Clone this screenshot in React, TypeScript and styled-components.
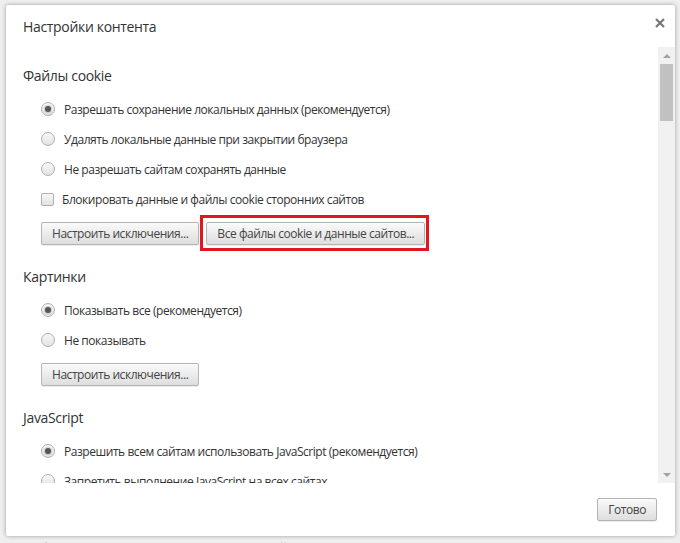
import { createGlobalStyle } from 'styled-components';
import styled from 'styled-components';

const GlobalStyle = createGlobalStyle`
  html, body {
    margin: 0;
    padding: 0;
    height: 543px;
    overflow: hidden;
    background: #efefef;
  }
  body {
    font-family: 'Open Sans', 'Noto Sans', sans-serif;
    color: #333;
  }
`;

type TOption = {
  label: string;
  checked?: boolean;
};

const cookieOptions: TOption[] = [
  { label: 'Разрешать сохранение локальных данных (рекомендуется)', checked: true },
  { label: 'Удалять локальные данные при закрытии браузера' },
  { label: 'Не разрешать сайтам сохранять данные' }
];

const imageOptions: TOption[] = [
  { label: 'Показывать все (рекомендуется)', checked: true },
  { label: 'Не показывать' }
];

const jsOptions: TOption[] = [
  { label: 'Разрешить всем сайтам использовать JavaScript (рекомендуется)', checked: true },
  { label: 'Запретить выполнение JavaScript на всех сайтах' }
];

const RadioList = ({ options }: { options: TOption[] }) => (
  <>
    {options.map((o) => (
      <OptionRow key={o.label}>
        <Radio $checked={!!o.checked} />
        <OptionLabel>{o.label}</OptionLabel>
      </OptionRow>
    ))}
  </>
);

export default function App() {
  return (
    <Backdrop>
      <GlobalStyle />
      <Dialog>
        <Header>
          <Title>Настройки контента</Title>
          <CloseButton aria-label="Закрыть">
            <svg width="10" height="10" viewBox="0 0 10 10">
              <path d="M1 1 L9 9 M9 1 L1 9" stroke="#767676" strokeWidth="2.2" />
            </svg>
          </CloseButton>
        </Header>

        <Body>
          <Content>
            <Section>
              <SectionTitle>Файлы cookie</SectionTitle>
              <RadioList options={cookieOptions} />
              <OptionRow>
                <Checkbox />
                <OptionLabel>Блокировать данные и файлы cookie сторонних сайтов</OptionLabel>
              </OptionRow>
              <ButtonRow>
                <Button>Настроить исключения...</Button>
                <Button $highlight>Все файлы cookie и данные сайтов...</Button>
              </ButtonRow>
            </Section>

            <Section>
              <SectionTitle>Картинки</SectionTitle>
              <RadioList options={imageOptions} />
              <ButtonRow>
                <Button>Настроить исключения...</Button>
              </ButtonRow>
            </Section>

            <Section>
              <SectionTitle>JavaScript</SectionTitle>
              <RadioList options={jsOptions} />
            </Section>
          </Content>

          <Scrollbar>
            <ScrollArrow>
              <ArrowUp />
            </ScrollArrow>
            <ScrollThumb />
            <ScrollSpacer />
            <ScrollArrow>
              <ArrowDown />
            </ScrollArrow>
          </Scrollbar>
        </Body>

        <Footer>
          <Button>Готово</Button>
        </Footer>
      </Dialog>
      <PageBehind>Chrome использует системные настройки прокси-сервера</PageBehind>
    </Backdrop>
  );
}

const Backdrop = styled.div`
  padding: 5px 0 0 6px;
`;

const Dialog = styled.div`
  width: 669px;
  height: 531px;
  background: #fff;
  border-radius: 2px;
  box-shadow: 0 0 4px rgba(0, 0, 0, 0.35);
  display: flex;
  flex-direction: column;
  overflow: hidden;
`;

const Header = styled.div`
  height: 42px;
  flex: 0 0 42px;
  box-sizing: border-box;
  padding: 11px 5px 0 17px;
  display: flex;
  justify-content: space-between;
  align-items: flex-start;
`;

const Title = styled.h1`
  margin: 0;
  font-size: 14px;
  line-height: 22px;
  font-weight: 400;
  letter-spacing: -0.33px;
  color: #333;
`;

const CloseButton = styled.button`
  width: 20px;
  height: 20px;
  margin-top: -3px;
  padding: 0;
  border: 0;
  background: transparent;
  display: flex;
  align-items: center;
  justify-content: center;
`;

const Body = styled.div`
  flex: 1;
  display: flex;
  min-height: 0;
`;

const Content = styled.div`
  flex: 1;
  overflow: hidden;
  padding: 18px 0 0 17px;
  display: flex;
  flex-direction: column;
  gap: 21px;
`;

const Section = styled.section`
  display: flex;
  flex-direction: column;
`;

const SectionTitle = styled.h2`
  margin: 0 0 7px;
  font-size: 14px;
  line-height: 22px;
  font-weight: 400;
  letter-spacing: -0.33px;
  color: #333;
`;

const OptionRow = styled.div`
  height: 30px;
  padding-left: 18px;
  display: flex;
  align-items: center;
`;

const Radio = styled.span<{ $checked: boolean }>`
  width: 14px;
  height: 14px;
  flex: 0 0 14px;
  box-sizing: border-box;
  border-radius: 50%;
  border: 1px solid #b0b0b0;
  background: linear-gradient(#f8f8f8, #e2e2e2);
  display: flex;
  align-items: center;
  justify-content: center;
  margin-right: 9px;

  &::after {
    content: '';
    display: ${({ $checked }) => ($checked ? 'block' : 'none')};
    width: 6px;
    height: 6px;
    border-radius: 50%;
    background: #555;
    box-shadow: 0 0 1px 1px rgba(0, 0, 0, 0.15);
  }
`;

const Checkbox = styled.span`
  width: 13px;
  height: 13px;
  flex: 0 0 13px;
  box-sizing: border-box;
  border: 1px solid #b0b0b0;
  border-radius: 2px;
  background: linear-gradient(#f8f8f8, #e2e2e2);
  margin-right: 8px;
`;

const OptionLabel = styled.span`
  font-size: 12px;
  letter-spacing: -0.45px;
  color: #333;
  white-space: nowrap;
`;

const ButtonRow = styled.div`
  margin-top: 8px;
  padding-left: 18px;
  display: flex;
  gap: 7px;
`;

const Button = styled.button<{ $highlight?: boolean }>`
  position: relative;
  height: 23px;
  padding: 0 10px;
  font-family: inherit;
  font-size: 12px;
  letter-spacing: -0.45px;
  color: #444;
  border: 1px solid #b4b4b4;
  border-radius: 2px;
  background: linear-gradient(#fafafa, #dedede);
  box-shadow: 0 1px 0 rgba(0, 0, 0, 0.08);
  white-space: nowrap;

  &::after {
    content: '';
    display: ${({ $highlight }) => ($highlight ? 'block' : 'none')};
    position: absolute;
    top: -8px;
    left: -7px;
    right: -5px;
    bottom: -7px;
    border: 3px solid #e3151f;
  }
`;

const Scrollbar = styled.div`
  width: 17px;
  flex: 0 0 17px;
  background: #f1f1f1;
  display: flex;
  flex-direction: column;
`;

const ScrollArrow = styled.div`
  height: 17px;
  flex: 0 0 17px;
  display: flex;
  align-items: center;
  justify-content: center;
`;

const ArrowUp = styled.span`
  width: 0;
  height: 0;
  border-left: 4px solid transparent;
  border-right: 4px solid transparent;
  border-bottom: 4px solid #a3a3a3;
`;

const ArrowDown = styled.span`
  width: 0;
  height: 0;
  border-left: 4px solid transparent;
  border-right: 4px solid transparent;
  border-top: 4px solid #a3a3a3;
`;

const ScrollThumb = styled.div`
  height: 57px;
  margin: 0 2px;
  background: #c1c1c1;
`;

const ScrollSpacer = styled.div`
  flex: 1;
`;

const Footer = styled.div`
  height: 53px;
  flex: 0 0 53px;
  box-sizing: border-box;
  padding: 15px 18px 0 0;
  display: flex;
  justify-content: flex-end;
  align-items: flex-start;
`;

const PageBehind = styled.div`
  margin: 2px 0 0 30px;
  font-size: 13px;
  color: #b8b8b8;
  white-space: nowrap;
`;
